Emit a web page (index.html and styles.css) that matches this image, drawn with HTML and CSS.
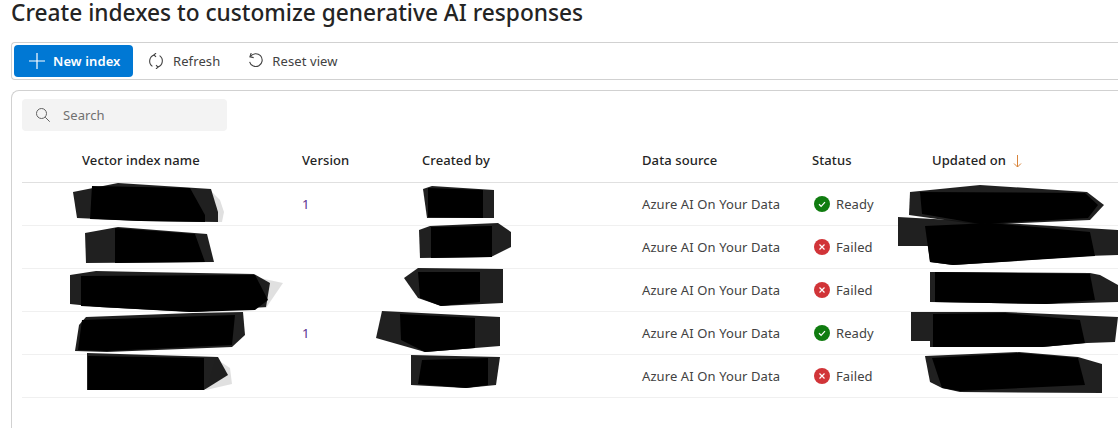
FILE: index.html
```html
<!DOCTYPE html>
<html lang="en">
<head>
<meta charset="utf-8">
<title>Create indexes</title>
<link rel="stylesheet" href="styles.css">
</head>
<body>
<h1 class="title">Create indexes to customize generative AI responses</h1>
<div class="toolbar">
  <button class="btn primary">
    <svg class="ico" viewBox="0 0 16 16"><path d="M8 0v16M0 8h16" fill="none" stroke="currentColor" stroke-width="1.2"/></svg>
    <span>New index</span>
  </button>
  <button class="btn refresh">
    <svg class="ico" viewBox="0 0 16 16" fill="none" stroke="currentColor" stroke-width="1.1"><path d="M6.2 1.9A6.5 6.5 0 0 0 4.4 13.4M9.8 14.1A6.5 6.5 0 0 0 11.6 2.6"/><path d="M8 0 6 1.9 8 3.9M8 16 10 14.1 8 12.1"/></svg>
    <span>Refresh</span>
  </button>
  <button class="btn">
    <svg class="ico" viewBox="0 0 16 16" fill="none" stroke="currentColor" stroke-width="1.1"><path d="M2.4 3.6A6.4 6.4 0 1 1 1.6 8.8"/><path d="M3.2 0 1.9 3.8 5.7 4.6"/></svg>
    <span>Reset view</span>
  </button>
</div>
<section class="card">
  <label class="search">
    <svg class="search-ico" viewBox="0 0 14 14" fill="none" stroke="currentColor" stroke-width="1"><circle cx="5.5" cy="5.5" r="5"/><path d="M9.2 9.2 13.7 13.7"/></svg>
    <span>Search</span>
  </label>
  <div class="grid head">
    <div></div><div>Vector index name</div><div>Version</div><div>Created by</div><div>Data source</div><div>Status</div>
    <div>Updated on <svg class="sort" viewBox="0 0 9 14" fill="none" stroke="currentColor" stroke-width="1"><path d="M4.5 1v12M1 9.5l3.5 3.5L8 9.5"/></svg></div>
  </div>
  <div class="grid row">
    <div></div><div></div><div class="ver">1</div><div></div><div>Azure AI On Your Data</div>
    <div class="status"><svg class="st" viewBox="0 0 16 16"><circle class="ok" cx="8" cy="8" r="8"/><path class="mark" d="M5 8.3l2.1 2L11 6.2"/></svg>Ready</div><div></div>
  </div>
  <div class="grid row">
    <div></div><div></div><div></div><div></div><div>Azure AI On Your Data</div>
    <div class="status"><svg class="st" viewBox="0 0 16 16"><circle class="bad" cx="8" cy="8" r="8"/><path class="mark" d="M5.5 5.5l5 5M10.5 5.5l-5 5"/></svg>Failed</div><div></div>
  </div>
  <div class="grid row">
    <div></div><div></div><div></div><div></div><div>Azure AI On Your Data</div>
    <div class="status"><svg class="st" viewBox="0 0 16 16"><circle class="bad" cx="8" cy="8" r="8"/><path class="mark" d="M5.5 5.5l5 5M10.5 5.5l-5 5"/></svg>Failed</div><div></div>
  </div>
  <div class="grid row">
    <div></div><div></div><div class="ver">1</div><div></div><div>Azure AI On Your Data</div>
    <div class="status"><svg class="st" viewBox="0 0 16 16"><circle class="ok" cx="8" cy="8" r="8"/><path class="mark" d="M5 8.3l2.1 2L11 6.2"/></svg>Ready</div><div></div>
  </div>
  <div class="grid row">
    <div></div><div></div><div></div><div></div><div>Azure AI On Your Data</div>
    <div class="status"><svg class="st" viewBox="0 0 16 16"><circle class="bad" cx="8" cy="8" r="8"/><path class="mark" d="M5.5 5.5l5 5M10.5 5.5l-5 5"/></svg>Failed</div><div></div>
  </div>
</section>
<svg class="redactions" viewBox="0 0 1118 441" aria-hidden="true">
  <g class="halo">
    <polygon points="250,276 283,283 266,308 240,308"/>
    <polygon points="210,190 220,200 224,212 222,222 210,222"/>
    <polygon points="215,358 230,368 232,384 206,390"/>
  </g>
  <g class="soft">
    <polygon points="73,192 118,183 211,189 218,212 218,222 141,221 77,218"/>
    <polygon points="85,233 118,227 207,234 214,262 86,263"/>
    <polygon points="70,275 96,271 143,272 254,274 270,283 266,307 195,312 100,307 70,304"/>
    <polygon points="86,317 193,313 243,312 245,335 232,347 107,352 75,351 79,325"/>
    <polygon points="87,353 218,357 228,375 204,390 87,390"/>
    <polygon points="423,189 432,186 494,190 494,218 427,218"/>
    <polygon points="419,230 430,226 498,223 511,232 511,247 491,257 420,258"/>
    <polygon points="404,278 418,268 503,269 503,303 441,306 418,298"/>
    <polygon points="382,311 500,317 500,346 425,352 376,338"/>
    <polygon points="411,355 500,357 496,385 466,388 411,385"/>
    <polygon points="910,192 980,185 1087,192 1104,205 1090,220 980,225 909,215"/>
    <polygon points="898,217 987,222 1118,230 1118,255 1087,256 953,265 930,262 928,246 898,246"/>
    <polygon points="930,272 1090,273 1100,275 1118,285 1118,302 1046,304 930,302"/>
    <polygon points="911,312 1005,312 1118,317 1115,342 1087,343 1042,347 930,347 930,341 911,341"/>
    <polygon points="925,356 1019,352 1078,357 1102,364 1102,393 960,392 942,388 930,382"/>
  </g>
  <g class="core">
    <polygon points="92,186 190,188 205,215 205,222 141,221 90,219"/>
    <polygon points="115,228 195,234 205,262 115,263"/>
    <polygon points="81,276 255,275 268,300 255,310 190,312 81,306"/>
    <polygon points="82,320 235,315 232,345 107,351 78,350"/>
    <polygon points="88,356 204,358 204,390 88,390"/>
    <polygon points="428,188 483,190 483,218 428,217"/>
    <polygon points="431,227 492,226 492,257 431,258"/>
    <polygon points="418,272 480,272 480,302 441,306 420,298"/>
    <polygon points="400,314 475,318 475,348 425,352 401,340"/>
    <polygon points="422,360 488,358 488,385 466,388 418,384"/>
    <polygon points="920,192 1085,193 1098,205 1088,218 980,224 922,214"/>
    <polygon points="925,226 990,223 1090,232 1095,256 953,265 930,262"/>
    <polygon points="935,272 1090,274 1095,300 1046,304 935,302"/>
    <polygon points="933,314 1005,313 1080,320 1085,343 1042,347 933,347"/>
    <polygon points="932,358 1019,353 1078,358 1085,385 960,391 942,388"/>
  </g>
</svg>
</body>
</html>
```

FILE: styles.css
```css
* { box-sizing: border-box; }
html, body { margin: 0; height: 441px; overflow: hidden; background: #fff; }
body {
  position: relative;
  font-family: "Noto Sans", "Open Sans", sans-serif;
  font-size: 13px;
  letter-spacing: .1px;
  color: #242424;
  padding-left: 11px;
}
.title {
  margin: 0;
  height: 42px;
  font-size: 22.7px;
  line-height: 26px;
  font-weight: 500;
  letter-spacing: 0;
  white-space: nowrap;
}
.toolbar {
  height: 38px;
  border: 1px solid #d1d1d1;
  border-right: 0;
  border-radius: 4px 0 0 4px;
  padding: 2px;
  display: flex;
}
.btn {
  display: flex;
  align-items: center;
  gap: 8px;
  height: 32px;
  padding: 0 14px 0 15px;
  border: 0;
  background: none;
  font: inherit;
  letter-spacing: inherit;
  color: #424242;
  white-space: nowrap;
}
.btn.refresh { gap: 9px; padding-right: 13px; }
.btn.primary {
  width: 119px;
  background: #0078d4;
  color: #fff;
  font-weight: 600;
  border-radius: 4px;
  padding: 0 0 0 15px;
}
.ico { width: 16px; height: 16px; flex: none; }
.card {
  margin-top: 10px;
  height: 338px;
  border: 1px solid #d1d1d1;
  border-width: 1px 0 0 1px;
  border-radius: 8px 0 0 0;
  padding: 8px 0 0 10px;
}
.search {
  display: flex;
  align-items: center;
  width: 205px;
  height: 32px;
  padding-left: 14px;
  gap: 13px;
  background: #f3f3f3;
  border-radius: 4px;
  color: #707070;
}
.search-ico { width: 14px; height: 14px; color: #616161; }
.grid {
  display: grid;
  grid-template-columns: 60px 220px 120px 220px 170px 120px 1fr;
  align-items: center;
}
.head {
  height: 52px;
  border-bottom: 1px solid #e0e0e0;
  font-weight: 500;
  padding-top: 6px;
}
.row { height: 43px; border-bottom: 1px solid #f0f0f0; color: #424242; }
.ver { color: #5c2e91; }
.status { display: flex; align-items: center; gap: 6px; padding-left: 2px; }
.st { width: 16px; height: 16px; flex: none; }
.ok { fill: #107c10; }
.bad { fill: #d13438; }
.mark { fill: none; stroke: #fff; stroke-width: 1.2; }
.sort { width: 9px; height: 14px; vertical-align: -3px; margin-left: 3px; color: #d9843b; }
.redactions { position: absolute; left: 0; top: 0; width: 1118px; height: 441px; pointer-events: none; }
.halo polygon { fill: #000; fill-opacity: .12; }
.soft polygon { fill: #141414; fill-opacity: .95; }
.core polygon { fill: #000; }
```
